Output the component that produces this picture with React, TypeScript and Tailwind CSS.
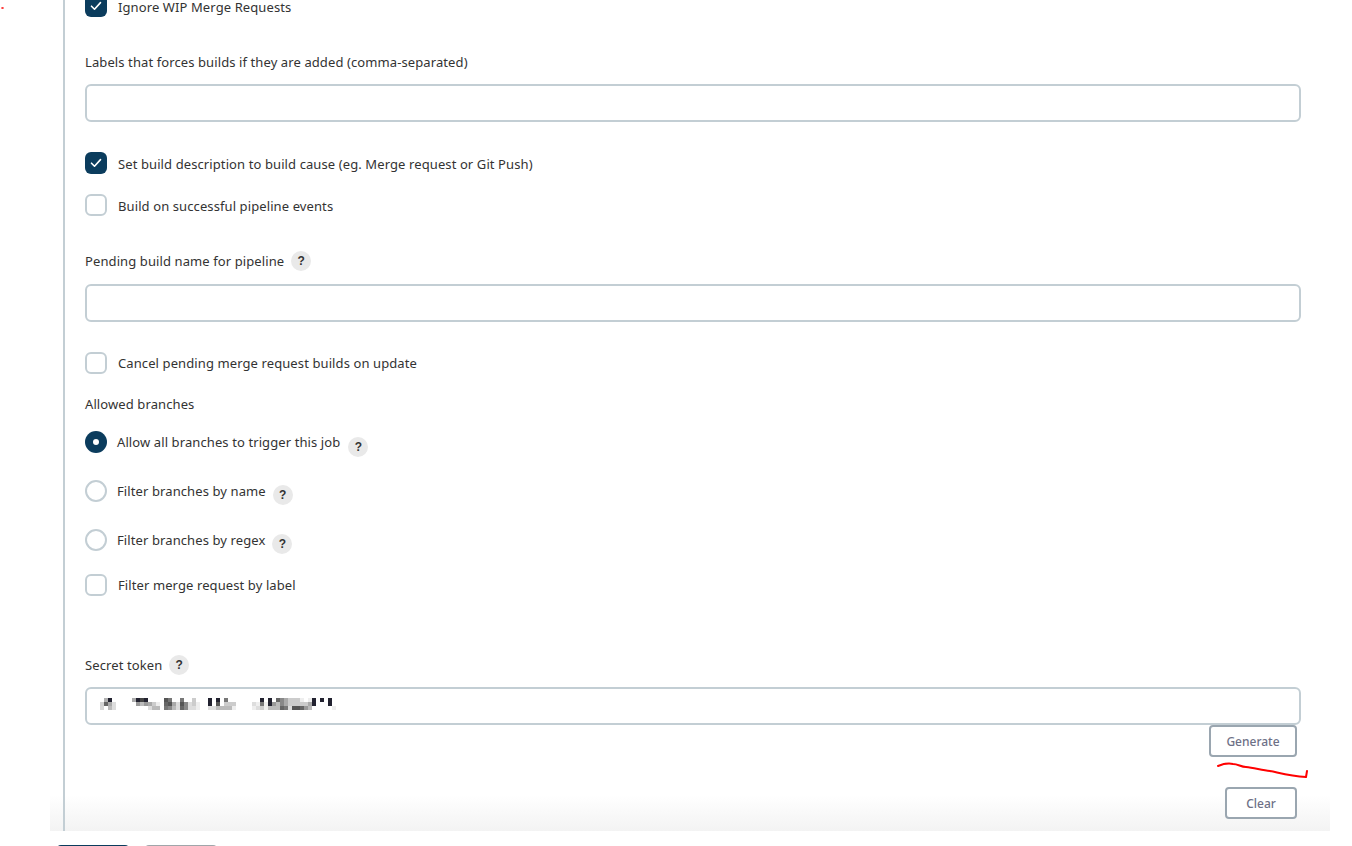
const CK = () => (
  <span className="flex h-[22px] w-[22px] shrink-0 items-center justify-center rounded-[6px] bg-[#0b3c5d]">
    <svg width="12" height="10" viewBox="0 0 12 10" fill="none" stroke="#fff" strokeWidth="1.6" strokeLinecap="round" strokeLinejoin="round"><path d="M1.5 5.2 4.5 8.2 10.5 1.6" /></svg>
  </span>
);
const UC = () => <span className="block h-[22px] w-[22px] shrink-0 rounded-[6px] border-2 border-[#c3ced4] bg-white" />;
const RadioOn = () => (
  <span className="flex h-[22px] w-[22px] shrink-0 items-center justify-center rounded-full bg-[#0b3c5d]">
    <span className="block h-[6px] w-[6px] rounded-full bg-white" />
  </span>
);
const RadioOff = () => <span className="block h-[22px] w-[22px] shrink-0 rounded-full border-2 border-[#c3ced4] bg-white" />;
const Help = ({ className = "" }: { className?: string }) => (
  <span className={`flex h-[20px] w-[20px] shrink-0 items-center justify-center rounded-full bg-[#e9e9e9] text-[12px] font-bold text-[#333] ${className}`} style={{ fontFamily: '"Liberation Sans", sans-serif' }}>?</span>
);
const Input = ({ children }: { children?: React.ReactNode }) => (
  <div className="flex h-[38px] w-[1216px] items-center rounded-[6px] border-2 border-[#c3ced4] bg-white pl-[13px]">{children}</div>
);
const cells: [number, string, string, string][] = [
  [0, "", "#d4d4d4", "#d8d8d8"], [1, "#b0b0b0", "#666", ""], [2, "#222230", "#aaa", "#bbb"], [3, "", "#ddd", "#ddd"],
  [8, "#aaa", "", ""], [9, "#222230", "#999", ""], [10, "#444", "#bbb", ""], [11, "#222230", "#999", ""], [12, "", "#aaa", "#ddd"], [13, "", "#ccc", "#bbb"], [14, "", "#eee", "#bbb"],
  [16, "#555", "#666", "#777"], [17, "#777", "#555", "#888"], [18, "", "#aaa", "#bbb"], [19, "", "#ddd", "#ddd"], [20, "#777", "#555", "#666"], [21, "", "#888", "#888"], [22, "", "#ddd", "#ddd"], [23, "#ccc", "#ccc", "#ddd"], [24, "", "#eee", "#eee"],
  [27, "#222230", "#222230", "#ddd"], [28, "", "", "#ddd"], [29, "#222230", "#555", "#bbb"], [30, "", "", "#bbb"], [31, "#777", "#ccc", "#bbb"], [32, "", "#ccc", "#bbb"], [33, "", "#ccc", "#eee"],
  [38, "", "#ddd", "#eee"], [39, "", "#eee", "#ddd"], [40, "#222230", "#777", "#ccc"], [41, "", "#eee", "#eee"], [42, "#222230", "#222230", "#bbb"], [43, "", "#999", "#bbb"], [44, "#666", "#bbb", "#bbb"], [45, "#888", "#888", "#666"], [46, "#aaa", "#aaa", "#777"], [47, "#ccc", "#ccc", "#ddd"], [48, "#ccc", "#ccc", "#555"], [49, "#ccc", "#ccc", "#555"], [50, "#eee", "#ccc", "#666"], [51, "", "#ccc", "#999"], [52, "#eee", "#aaa", "#bbb"], [53, "#222230", "#222230", ""], [55, "#222230", "", ""], [57, "#222230", "#222230", ""], [58, "", "", "#eee"],
];
const Row = ({ box, label, className = "", labelClass = "" }: { box: React.ReactNode; label: string; className?: string; labelClass?: string }) => (
  <div className={`flex h-[22px] items-center gap-[11px] ${className}`}>{box}<span className={labelClass}>{label}</span></div>
);
const RadioRow = ({ box, label, help, className = "" }: { box: React.ReactNode; label: string; help: string; className?: string }) => (
  <div className={`flex h-[22px] items-center gap-[10px] ${className}`}>
    {box}
    <span>{label}</span>
    <Help className={help} />
  </div>
);

export default function App() {
  return (
    <div className="relative h-[846px] w-[1352px] overflow-hidden bg-white text-[13px] leading-[20px] tracking-[0.1px] text-[#333]" style={{ fontFamily: '"Noto Sans", sans-serif' }}>
      <div className="relative h-[831px]">
        <div className="absolute bottom-0 left-[50px] h-[36px] w-[1280px] bg-gradient-to-b from-white to-[#f3f3f3]" />
        <div className="relative ml-[63px] flex h-[831px] flex-col border-l-2 border-[#c3ced4] pl-[20px]">
          <div className="flex h-[17px] items-start gap-[11px]">
            <span className="-mt-[5px]"><CK /></span>
            <span className="leading-[14px]">Ignore WIP Merge Requests</span>
          </div>
          <div className="mt-[34px] h-[22px] leading-[22px]">Labels that forces builds if they are added (comma-separated)</div>
          <div className="mt-[11px]"><Input /></div>
          <Row box={<CK />} label="Set build description to build cause (eg. Merge request or Git Push)" labelClass="pt-[1px]" className="mt-[30px]" />
          <Row box={<UC />} label="Build on successful pipeline events" labelClass="pt-[1px]" className="mt-[20px]" />
          <div className="mt-[35px] flex h-[20px] items-center gap-[7px]"><span>Pending build name for pipeline</span><Help /></div>
          <div className="mt-[13px]"><Input /></div>
          <Row box={<UC />} label="Cancel pending merge request builds on update" className="mt-[30px]" />
          <div className="mt-[19px] h-[22px] leading-[22px]">Allowed branches</div>
          <RadioRow box={<RadioOn />} label="Allow all branches to trigger this job" help="mt-[10px] ml-[-2px]" className="mt-[16px]" />
          <RadioRow box={<RadioOff />} label="Filter branches by name" help="mt-[8px] ml-[-3px]" className="mt-[27px]" />
          <RadioRow box={<RadioOff />} label="Filter branches by regex" help="mt-[8px] ml-[-3px]" className="mt-[27px]" />
          <Row box={<UC />} label="Filter merge request by label" className="mt-[23px]" />
          <div className="mt-[59px] flex h-[20px] items-center gap-[7px]"><span>Secret token</span><Help /></div>
          <div className="mt-[12px]">
            <Input>
              <svg className="-mt-[4px]" width="236" height="12" viewBox="0 0 236 12" shapeRendering="crispEdges">
                {cells.flatMap(([c, a, b, d]) => [a, b, d].map((f, r) => f ? <rect key={`${c}-${r}`} x={c * 4} y={r * 4} width={4} height={4} fill={f} /> : null))}
              </svg>
            </Input>
          </div>
          <div className="flex w-[1212px] justify-end">
            <button className="h-[32px] w-[88px] rounded-[4px] border-2 border-[#9aa6b0] bg-white pt-[1px] text-[12px] font-medium tracking-normal text-[#6d7086]">Generate</button>
          </div>
          <div className="mt-[30px] flex w-[1212px] justify-end">
            <button className="h-[32px] w-[72px] rounded-[4px] border-2 border-[#9aa6b0] bg-white pt-[1px] text-[12px] font-medium tracking-normal text-[#6d7086]">Clear</button>
          </div>
        </div>
      </div>
      <div className="ml-[57px] mt-[14px] flex gap-[16px]">
        <span className="block h-[4px] w-[72px] rounded-t-[6px] bg-[#0b3c5d]" />
        <span className="block h-[4px] w-[72px] rounded-t-[6px] bg-[#a0a6aa]" />
      </div>
      <svg className="absolute left-0 top-0" width="1352" height="846" fill="none" stroke="#f00" strokeLinecap="round" strokeLinejoin="round">
        <path d="M2 8h1" strokeWidth="1.6" />
        <path d="M1218 766c5-2 10-3 15-2 5 0 8 3 13 3 8 1 16 3 24 4 10 2 20 5 36 6l1-6" strokeWidth="2" />
      </svg>
    </div>
  );
}
